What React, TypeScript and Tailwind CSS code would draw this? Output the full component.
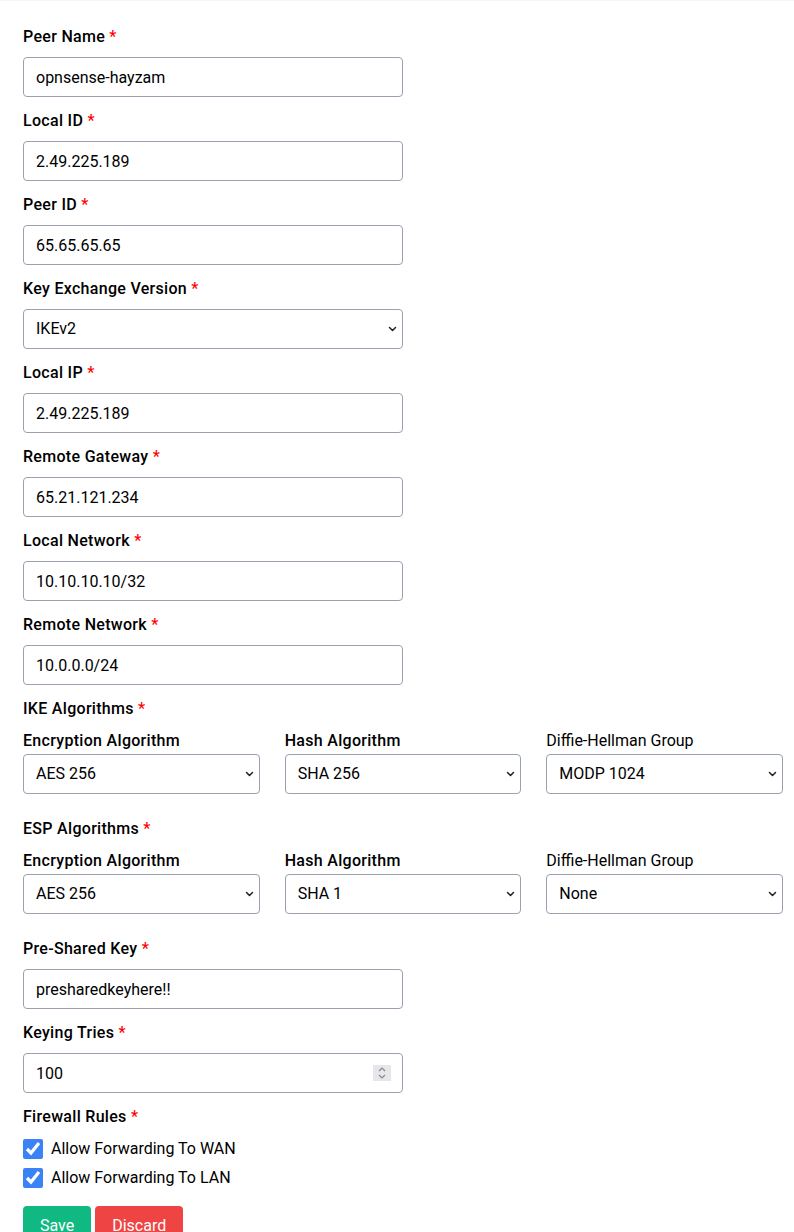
import { useState } from 'react';

function Label({ text, required = true }: { text: string; required?: boolean }) {
  return (
    <label className="block font-medium tracking-[0.3px] leading-6 mb-2">
      {text}
      {required && <span className="text-[#ff0000]"> *</span>}
    </label>
  );
}

const inputCls =
  'block w-[380px] h-10 px-3 border border-gray-400 rounded bg-white text-base text-black outline-none';

function Chevron() {
  return (
    <svg
      className="pointer-events-none absolute right-[6px] top-1/2 -translate-y-1/2"
      width="9"
      height="6"
      viewBox="0 0 9 6"
      fill="none"
      stroke="#222"
      strokeWidth="1.5"
      strokeLinecap="round"
      strokeLinejoin="round"
    >
      <path d="M1.5 1.5 L4.5 4.5 L7.5 1.5" />
    </svg>
  );
}

function Select({ value, options, wide = false }: { value: string; options: string[]; wide?: boolean }) {
  return (
    <div className={wide ? 'relative w-[380px]' : 'relative w-full'}>
      <select
        className="block w-full h-10 pl-3 pr-6 appearance-none border border-gray-400 rounded bg-white text-base text-black outline-none"
        defaultValue={value}
      >
        {options.map((o) => (
          <option key={o}>{o}</option>
        ))}
      </select>
      <Chevron />
    </div>
  );
}

function TextField({ label, value }: { label: string; value: string }) {
  const [v, setV] = useState(value);
  return (
    <div className="mb-3">
      <Label text={label} />
      <input type="text" className={inputCls} value={v} onChange={(e) => setV(e.target.value)} />
    </div>
  );
}

function AlgoGroup({ title, enc, hash, dh }: { title: string; enc: string; hash: string; dh: string }) {
  return (
    <div className="mb-[23px]">
      <Label text={title} />
      <div className="grid grid-cols-3 gap-x-[25px] w-[760px]">
        <div>
          <div className="font-medium tracking-[0.3px] leading-6 mb-px">Encryption Algorithm</div>
          <Select value={enc} options={['AES 128', 'AES 256']} />
        </div>
        <div>
          <div className="font-medium tracking-[0.3px] leading-6 mb-px">Hash Algorithm</div>
          <Select value={hash} options={['SHA 1', 'SHA 256']} />
        </div>
        <div>
          <div className="leading-6 mb-px">Diffie-Hellman Group</div>
          <Select value={dh} options={['None', 'MODP 1024', 'MODP 2048']} />
        </div>
      </div>
    </div>
  );
}

function App() {
  const [wan, setWan] = useState(true);
  const [lan, setLan] = useState(true);
  const [tries, setTries] = useState('100');

  return (
    <div className="min-h-screen bg-white text-black border-t border-gray-100 font-['Roboto',sans-serif]">
      <div className="pl-[23px] pt-6">
        <TextField label="Peer Name" value="opnsense-hayzam" />
        <TextField label="Local ID" value="2.49.225.189" />
        <TextField label="Peer ID" value="65.65.65.65" />
        <div className="mb-3">
          <Label text="Key Exchange Version" />
          <Select value="IKEv2" options={['IKEv1', 'IKEv2']} wide />
        </div>
        <TextField label="Local IP" value="2.49.225.189" />
        <TextField label="Remote Gateway" value="65.21.121.234" />
        <TextField label="Local Network" value="10.10.10.10/32" />
        <TextField label="Remote Network" value="10.0.0.0/24" />

        <AlgoGroup title="IKE Algorithms" enc="AES 256" hash="SHA 256" dh="MODP 1024" />
        <AlgoGroup title="ESP Algorithms" enc="AES 256" hash="SHA 1" dh="None" />

        <TextField label="Pre-Shared Key" value="presharedkeyhere!!" />
        <div className="mb-3">
          <Label text="Keying Tries" />
          <div className="relative w-[380px]">
            <input
              type="number"
              className={inputCls + ' [appearance:textfield] [&::-webkit-inner-spin-button]:appearance-none'}
              value={tries}
              onChange={(e) => setTries(e.target.value)}
            />
            <div className="pointer-events-none absolute right-[12px] top-1/2 -translate-y-1/2 w-[18px] h-[16px] bg-gray-200 flex flex-col items-center justify-center gap-[2px]">
              <svg width="8" height="5" viewBox="0 0 8 5" fill="none" stroke="#888" strokeWidth="1.2">
                <path d="M1 4 L4 1 L7 4" />
              </svg>
              <svg width="8" height="5" viewBox="0 0 8 5" fill="none" stroke="#888" strokeWidth="1.2">
                <path d="M1 1 L4 4 L7 1" />
              </svg>
            </div>
          </div>
        </div>

        <div className="mb-[14px]">
          <Label text="Firewall Rules" />
          <label className="flex items-center gap-2 h-[29px] -mt-[3px]">
            <input
              type="checkbox"
              className="w-5 h-5 accent-[#3b82f6]"
              checked={wan}
              onChange={() => setWan(!wan)}
            />
            <span>Allow Forwarding To WAN</span>
          </label>
          <label className="flex items-center gap-2 h-[29px]">
            <input
              type="checkbox"
              className="w-5 h-5 accent-[#3b82f6]"
              checked={lan}
              onChange={() => setLan(!lan)}
            />
            <span>Allow Forwarding To LAN</span>
          </label>
        </div>

        <div className="flex gap-1">
          <button className="px-[17px] py-2 bg-[#10b981] text-white rounded">Save</button>
          <button className="px-[17px] py-2 bg-[#ef4444] text-white rounded">Discard</button>
        </div>
      </div>
    </div>
  );
}

export default App;
